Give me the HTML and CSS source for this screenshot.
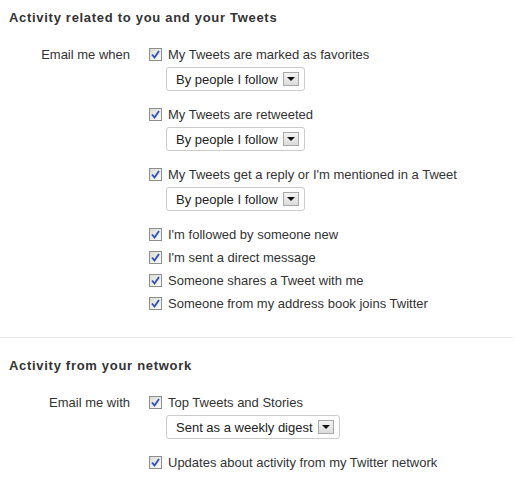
FILE: index.html
```html
<!DOCTYPE html>
<html lang="en">
<head>
    <meta charset="UTF-8">
    <title>Email notifications</title>
    <link rel="stylesheet" href="styles.css">
</head>
<body>
    <section class="prefs">
        <h2>Activity related to you and your Tweets</h2>
        <div class="field">
            <div class="field-label">Email me when</div>
            <div class="options">
                <div class="option">
                    <label class="check"><span class="box"><svg width="9" height="9" viewBox="0 0 9 9"><path d="M1 4.5 L3.5 7.5 L8 1" fill="none" stroke="#2f4fb4" stroke-width="1.8"/></svg></span>My Tweets are marked as favorites</label>
                    <div class="dropdown">By people I follow<span class="arrow"></span></div>
                </div>
                <div class="option">
                    <label class="check"><span class="box"><svg width="9" height="9" viewBox="0 0 9 9"><path d="M1 4.5 L3.5 7.5 L8 1" fill="none" stroke="#2f4fb4" stroke-width="1.8"/></svg></span>My Tweets are retweeted</label>
                    <div class="dropdown">By people I follow<span class="arrow"></span></div>
                </div>
                <div class="option">
                    <label class="check"><span class="box"><svg width="9" height="9" viewBox="0 0 9 9"><path d="M1 4.5 L3.5 7.5 L8 1" fill="none" stroke="#2f4fb4" stroke-width="1.8"/></svg></span>My Tweets get a reply or I'm mentioned in a Tweet</label>
                    <div class="dropdown">By people I follow<span class="arrow"></span></div>
                </div>
                <div class="option">
                    <label class="check"><span class="box"><svg width="9" height="9" viewBox="0 0 9 9"><path d="M1 4.5 L3.5 7.5 L8 1" fill="none" stroke="#2f4fb4" stroke-width="1.8"/></svg></span>I'm followed by someone new</label>
                    <label class="check"><span class="box"><svg width="9" height="9" viewBox="0 0 9 9"><path d="M1 4.5 L3.5 7.5 L8 1" fill="none" stroke="#2f4fb4" stroke-width="1.8"/></svg></span>I'm sent a direct message</label>
                    <label class="check"><span class="box"><svg width="9" height="9" viewBox="0 0 9 9"><path d="M1 4.5 L3.5 7.5 L8 1" fill="none" stroke="#2f4fb4" stroke-width="1.8"/></svg></span>Someone shares a Tweet with me</label>
                    <label class="check"><span class="box"><svg width="9" height="9" viewBox="0 0 9 9"><path d="M1 4.5 L3.5 7.5 L8 1" fill="none" stroke="#2f4fb4" stroke-width="1.8"/></svg></span>Someone from my address book joins Twitter</label>
                </div>
            </div>
        </div>
    </section>

    <section class="prefs network">
        <h2>Activity from your network</h2>
        <div class="field">
            <div class="field-label">Email me with</div>
            <div class="options">
                <div class="option">
                    <label class="check"><span class="box"><svg width="9" height="9" viewBox="0 0 9 9"><path d="M1 4.5 L3.5 7.5 L8 1" fill="none" stroke="#2f4fb4" stroke-width="1.8"/></svg></span>Top Tweets and Stories</label>
                    <div class="dropdown">Sent as a weekly digest<span class="arrow"></span></div>
                </div>
                <div class="option">
                    <label class="check"><span class="box"><svg width="9" height="9" viewBox="0 0 9 9"><path d="M1 4.5 L3.5 7.5 L8 1" fill="none" stroke="#2f4fb4" stroke-width="1.8"/></svg></span>Updates about activity from my Twitter network</label>
                </div>
            </div>
        </div>
    </section>
</body>
</html>
```

FILE: styles.css
```css
/* Base */
* {
    margin: 0;
    padding: 0;
    box-sizing: border-box;
}

body {
    font-family: "Liberation Sans", Arial, sans-serif;
    font-size: 13px;
    color: #333;
    background: #fff;
    width: 513px;
}

/* Sections */
.prefs {
    padding: 9px 0 10px 9px;
}

.network {
    border-top: 1px solid #e8e8e8;
    padding-top: 19px;
}

.prefs h2 {
    font-size: 13px;
    font-weight: bold;
    line-height: 18px;
    margin-bottom: 16px;
    letter-spacing: 0.7px;
}

/* Label + options */
.field {
    display: grid;
    grid-template-columns: 121px 1fr;
    column-gap: 19px;
}

.field-label {
    text-align: right;
    line-height: 23px;
}

.option {
    margin-bottom: 12px;
}

.check {
    display: flex;
    align-items: center;
    height: 23px;
}

.box {
    width: 13px;
    height: 13px;
    border: 1px solid #8e8f8f;
    background: linear-gradient(135deg, #dcdcd7, #fbfbf9);
    margin-right: 6px;
    display: flex;
    align-items: center;
    justify-content: center;
}

.box svg {
    display: block;
}

/* Dropdown */
.dropdown {
    display: inline-flex;
    align-items: center;
    height: 24px;
    margin: 1px 0 0 17px;
    padding: 0 5px 0 9px;
    border: 1px solid #ccc;
    border-radius: 3px;
    background: #fff;
    font-size: 13px;
    color: #222;
}

.arrow {
    position: relative;
    width: 16px;
    height: 14px;
    margin-left: 5px;
    border: 1px solid #a8a8a8;
    background: linear-gradient(#f4f4f4, #dcdcdc);
}

.arrow::after {
    content: "";
    position: absolute;
    left: 3px;
    top: 4px;
    border-left: 4px solid transparent;
    border-right: 4px solid transparent;
    border-top: 4px solid #111;
}
```
